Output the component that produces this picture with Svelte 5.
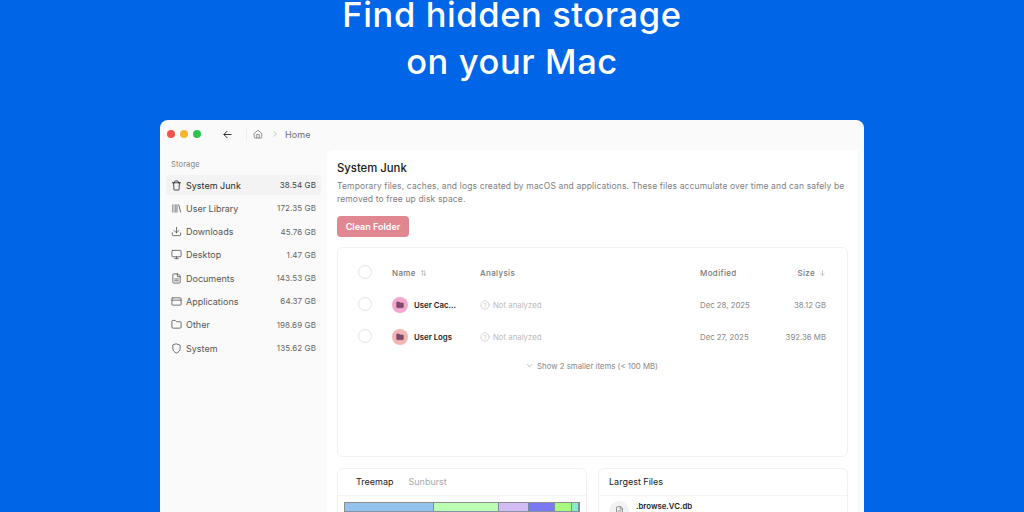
<script>
  const side = [
    { k: 'trash', n: 'System Junk', s: '38.54 GB', a: true },
    { k: 'lib', n: 'User Library', s: '172.35 GB' },
    { k: 'down', n: 'Downloads', s: '45.76 GB' },
    { k: 'desk', n: 'Desktop', s: '1.47 GB' },
    { k: 'doc', n: 'Documents', s: '143.53 GB' },
    { k: 'app', n: 'Applications', s: '64.37 GB' },
    { k: 'folder', n: 'Other', s: '198.69 GB' },
    { k: 'shield', n: 'System', s: '135.62 GB' }
  ];
  const icons = {
    trash: 'M3 6h18M8 6V4a2 2 0 0 1 2-2h4a2 2 0 0 1 2 2v2M5.500 6l1 15a1 1 0 0 0 1 1h9a1 1 0 0 0 1-1l1-15',
    lib: 'M4 4v16M9 4v16M13 4v16M17 4l4 16',
    down: 'M12 3v12M7 10l5 5 5-5M3 15v4a2 2 0 0 0 2 2h14a2 2 0 0 0 2-2v-4',
    desk: 'M4 3h16a2 2 0 0 1 2 2v10a2 2 0 0 1-2 2H4a2 2 0 0 1-2-2V5a2 2 0 0 1 2-2zM8 21h8M12 17v4',
    doc: 'M15 2H6a2 2 0 0 0-2 2v16a2 2 0 0 0 2 2h12a2 2 0 0 0 2-2V7zM14 2v6h6M8 13h8M8 17h8',
    app: 'M4 4h16a2 2 0 0 1 2 2v12a2 2 0 0 1-2 2H4a2 2 0 0 1-2-2V6a2 2 0 0 1 2-2zM2 9h20',
    folder: 'M20 20a2 2 0 0 0 2-2V8a2 2 0 0 0-2-2h-8l-3-3H4a2 2 0 0 0-2 2v13a2 2 0 0 0 2 2z',
    shield: 'M12 2l8 3v7c0 5-3.500 8-8 10-4.500-2-8-5-8-10V5z'
  };
  const rows = [
    { n: 'User Cac...', bg: '#f3a6cf', d: 'Dec 28, 2025', s: '38.12 GB' },
    { n: 'User Logs', bg: '#f2b5b3', d: 'Dec 27, 2025', s: '392.36 MB' }
  ];
  const tree = [
    { c: '#93c3ec', w: 89 },
    { c: '#bcfdb4', w: 65 },
    { c: '#d2bcf3', w: 30 },
    { c: '#7a78f2', w: 26 },
    { c: '#a8f97f', w: 17 },
    { c: '#86ecc6', w: 7 }
  ];
  const tree2 = [
    { c: '#a8838f', w: 52 },
    { c: '#7f98b4', w: 37 },
    { c: '#bcfdb4', w: 145 }
  ];
</script>

<div class="page">
  <h1 class="hero"><span>Find hidden storage</span><span>on your Mac</span></h1>

  <div class="win">
    <header class="titlebar">
      <div class="lights"><i class="r"></i><i class="y"></i><i class="g"></i></div>
      <svg class="back" viewBox="0 0 24 24"><path d="M20 12H5M11 5l-7 7 7 7" /></svg>
      <span class="sep"></span>
      <svg class="home" viewBox="0 0 24 24"><path d="M3 10.500 12 3l9 7.500V20a1.500 1.500 0 0 1-1.500 1.500h-15A1.500 1.500 0 0 1 3 20zM9 21.500V13h6v8.500" /></svg>
      <svg class="chev" viewBox="0 0 24 24"><path d="M9 5l7 7-7 7" /></svg>
      <span class="crumb">Home</span>
    </header>

    <div class="body">
      <aside class="sidebar">
        <div class="side-title">Storage</div>
        {#each side as it}
          <div class="side-item" class:active={it.a}>
            <svg viewBox="0 0 24 24"><path d={icons[it.k]} /></svg>
            <span class="side-name">{it.n}</span>
            <span class="side-size">{it.s}</span>
          </div>
        {/each}
      </aside>

      <main class="panel">
        <h2>System Junk</h2>
        <p class="desc">Temporary files, caches, and logs created by macOS and applications. These files accumulate over time and can safely be removed to free up disk space.</p>
        <button class="clean">Clean Folder</button>

        <section class="card table">
          <div class="row head">
            <span class="check"></span>
            <span class="c-name">Name
              <svg class="sort" viewBox="0 0 24 24"><path d="M8 20V4M4 8l4-4 4 4M16 4v16M12 16l4 4 4-4" /></svg>
            </span>
            <span class="c-an">Analysis</span>
            <span class="c-mod">Modified</span>
            <span class="c-size">Size
              <svg class="sort" viewBox="0 0 24 24"><path d="M12 4v16M6 14l6 6 6-6" /></svg>
            </span>
          </div>
          {#each rows as r}
            <div class="row item">
              <span class="check"></span>
              <span class="c-name">
                <span class="fic" style="background:{r.bg}">
                  <svg viewBox="0 0 24 24"><path d="M20 20a2 2 0 0 0 2-2V8a2 2 0 0 0-2-2h-8l-3-3H4a2 2 0 0 0-2 2v13a2 2 0 0 0 2 2z" /></svg>
                </span>
                <b>{r.n}</b>
              </span>
              <span class="c-an na">
                <svg viewBox="0 0 24 24"><circle cx="12" cy="12" r="10" /><path d="M9 9a3 3 0 0 1 5.800 1c0 2-3 2.500-3 4M12 17.500v.01" /></svg>
                Not analyzed
              </span>
              <span class="c-mod">{r.d}</span>
              <span class="c-size">{r.s}</span>
            </div>
          {/each}
          <div class="more">
            <svg viewBox="0 0 24 24"><path d="M5 9l7 7 7-7" /></svg>
            Show 2 smaller items (&lt; 100 MB)
          </div>
        </section>

        <div class="bottom">
          <section class="card map">
            <div class="tabs"><span class="on">Treemap</span><span>Sunburst</span></div>
            <div class="tree">
              <div class="tree-row top">
                {#each tree as t}
                  <span style="background:{t.c};width:{t.w}px"></span>
                {/each}
              </div>
              <div class="tree-row">
                {#each tree2 as t}
                  <span style="background:{t.c};width:{t.w}px"></span>
                {/each}
              </div>
            </div>
          </section>
          <section class="card files">
            <div class="files-head">Largest Files</div>
            <div class="file">
              <span class="file-ic">
                <svg viewBox="0 0 24 24"><path d="M15 2H6a2 2 0 0 0-2 2v16a2 2 0 0 0 2 2h12a2 2 0 0 0 2-2V7zM14 2v6h6M8 13h8M8 17h8" /></svg>
              </span>
              <b>.browse.VC.db</b>
            </div>
          </section>
        </div>
      </main>
    </div>
  </div>
</div>

<style>
  :global(body) { margin: 0; background: #0065e6; overflow: hidden; }
  * { box-sizing: border-box; }
  svg { fill: none; stroke: currentColor; stroke-width: 2; stroke-linecap: round; stroke-linejoin: round; flex: none; }
  .page {
    width: 1024px; height: 512px; overflow: hidden; background: #0065e6;
    display: flex; flex-direction: column; align-items: center;
    font-family: Inter, "Liberation Sans", sans-serif;
  }
  .hero {
    margin: 0; height: 120px; flex: none; color: #fff; text-align: center;
    font: 500 34.500px/30px Inter, sans-serif; letter-spacing: .6px; white-space: nowrap;
  }
  .hero span { display: block; height: 30px; }
  .hero span + span { margin-top: 17px; }
  .win { width: 704px; height: 392px; flex: none; background: #fafafa; border-radius: 8px 8px 0 0; overflow: hidden; }
  .titlebar { height: 30px; display: flex; align-items: center; padding: 0 0 2px 7px; color: #6f6f6f; }
  .lights { display: flex; gap: 5px; width: 55px; }
  .lights i { width: 8px; height: 8px; border-radius: 50%; }
  .r { background: #f2544e; } .y { background: #f4b72f; } .g { background: #2fc44b; }
  .back { width: 11px; height: 11px; color: #222; }
  .sep { width: 1px; height: 14px; background: #eee; margin: 0 6px 0 13px; }
  .home { width: 10px; height: 10px; stroke-width: 1.800; }
  .chev { width: 8px; height: 8px; margin: 0 6px 0 8px; color: #aaa; }
  .crumb { font-size: 9px; letter-spacing: .1px; }
  .body { display: flex; }
  .sidebar { width: 167px; padding: 0 6px; flex: none; }
  .side-title { font-size: 7.500px; color: #7d7d7d; height: 25px; padding: 10px 0 0 5px; letter-spacing: .15px; }
  .side-item {
    height: 20px; margin-bottom: 3.300px; display: flex; align-items: center; padding: 0 5px;
    font-size: 9px; color: #555; border-radius: 4px;
  }
  .side-item svg { width: 11px; height: 11px; stroke-width: 1.800; margin-right: 4px; }
  .side-item .side-size { margin-left: auto; font-size: 8px; color: #666; letter-spacing: .1px; }
  .side-item.active { background: #f3f3f3; color: #2a2a2a; }
  .side-item.active .side-size { color: #444; }
  .panel { width: 531px; height: 362px; background: #fff; border-radius: 6px 0 0 0; padding: 11px 10px 0; flex: none; }
  h2 { margin: 0; font-size: 11.300px; line-height: 15px; font-weight: 500; color: #1a1a1a; }
  .desc { margin: 3.500px 0 0; font-size: 8.500px; line-height: 13.500px; letter-spacing: .135px; color: #808080; }
  .clean {
    display: block; margin: 9px 0 0; width: 72px; height: 21px; border: 0; border-radius: 4px;
    background: #e08792; color: #fff; font: 600 9px Inter, sans-serif; padding: 0;
  }
  .card { border: 1px solid #f1f1f1; border-radius: 6px; background: #fff; }
  .table { margin-top: 10px; height: 210px; padding: 10px 21px 0 20px; }
  .row { display: flex; align-items: center; }
  .head { height: 31px; font-size: 8px; color: #777; letter-spacing: .35px; font-weight: 500; }
  .item { height: 32px; font-size: 7.800px; color: #888; }
  .check { width: 14px; height: 14px; border: 1px solid #e3e3e3; border-radius: 50%; flex: none; margin-right: 20px; position: relative; top: -1px; }
  .c-name { width: 88px; display: flex; align-items: center; flex: none; }
  .sort { width: 7px; height: 8px; margin-left: 4px; color: #999; stroke-width: 1.800; }
  .fic { width: 16px; height: 16px; border-radius: 50%; display: flex; align-items: center; justify-content: center; margin-right: 6px; flex: none; }
  .fic svg { width: 8px; height: 8px; fill: #7d4a68; stroke: #7d4a68; }
  b { font-weight: 600; color: #1c1c1c; font-size: 7.800px; }
  .c-an { width: 220px; flex: none; display: flex; align-items: center; }
  .na { color: #bbb; font-size: 7.800px; }
  .na svg { width: 10px; height: 10px; margin-right: 3px; stroke-width: 1.400; }
  .c-mod { width: 70px; flex: none; }
  .c-size { margin-left: auto; display: flex; align-items: center; }
  .more { display: flex; align-items: center; justify-content: center; gap: 4px; font-size: 7.800px; color: #888; height: 14px; margin-top: 6px; }
  .more svg { width: 7px; height: 7px; }
  .bottom { display: flex; gap: 11px; margin-top: 11px; }
  .map, .files { width: 250px; height: 60px; flex: none; }
  .tabs { height: 27px; display: flex; align-items: center; gap: 15px; padding-left: 18px; font-size: 9px; color: #aaa; border-bottom: 1px solid #f4f4f4; }
  .tabs .on { color: #222; }
  .tree { height: 14px; margin: 6px 6px 0; border: 1px solid #8d8d8d; border-bottom: 0; }
  .tree-row { display: flex; height: 12px; }
  .tree-row.top { height: 9px; border-bottom: 1px solid #8793a5; }
  .tree-row span { border-right: 1px solid #7b8aa0; flex: none; }
  .files-head { height: 27px; display: flex; align-items: center; padding-left: 10px; font-size: 9px; color: #222; border-bottom: 1px solid #f4f4f4; }
  .file { display: flex; align-items: flex-start; padding: 5px 0 0 10px; }
  .file-ic { width: 20px; height: 20px; background: #f2f2f2; border-radius: 50%; display: flex; align-items: center; justify-content: center; margin-right: 7px; color: #777; }
  .file-ic svg { width: 9px; height: 9px; }
</style>
